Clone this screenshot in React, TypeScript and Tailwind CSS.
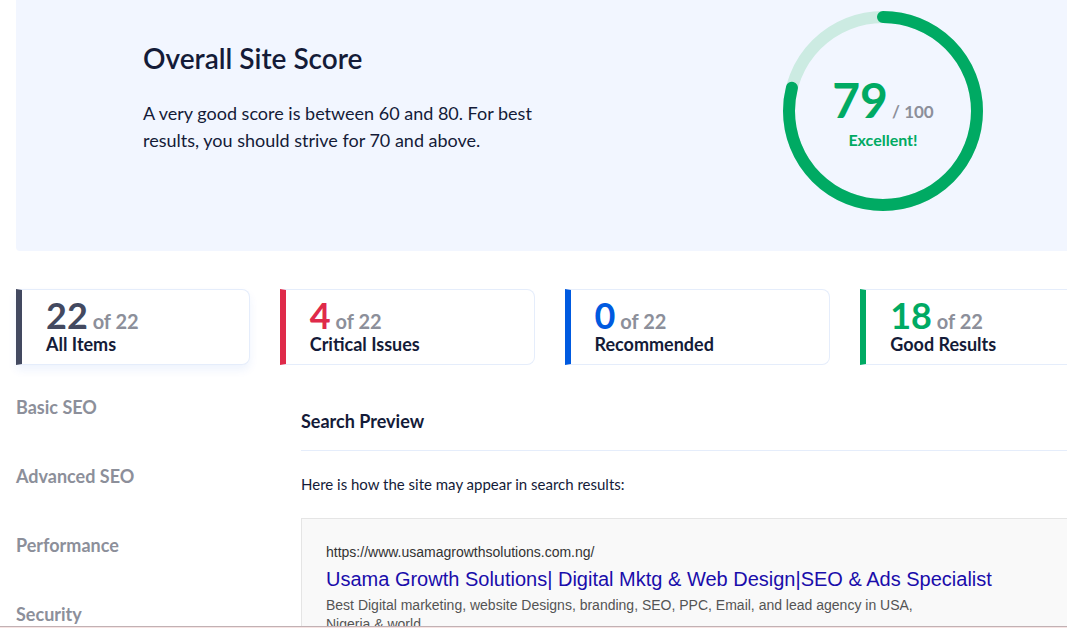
type Stat = {
  count: number;
  label: string;
  bar: string;
  number: string;
  active?: boolean;
};

const TOTAL = 22;
const SCORE = 79;

const stats: Stat[] = [
  { count: 22, label: "All Items", bar: "border-l-[#434960]", number: "text-[#434960]", active: true },
  { count: 4, label: "Critical Issues", bar: "border-l-[#df2a4a]", number: "text-[#df2a4a]" },
  { count: 0, label: "Recommended", bar: "border-l-[#005ae0]", number: "text-[#005ae0]" },
  { count: 18, label: "Good Results", bar: "border-l-[#00aa63]", number: "text-[#00aa63]" },
];

const sections = ["Basic SEO", "Advanced SEO", "Performance", "Security"];

function ScoreRing({ score }: { score: number }) {
  return (
    <div className="grid size-[200px] shrink-0 place-items-center">
      <svg viewBox="0 0 200 200" className="col-start-1 row-start-1 size-full" aria-hidden="true">
        <circle cx="100" cy="100" r="94" fill="none" stroke="#ccebe2" strokeWidth="12" />
        <circle
          cx="100"
          cy="100"
          r="94"
          fill="none"
          stroke="#00aa63"
          strokeWidth="12"
          strokeLinecap="round"
          pathLength="100"
          strokeDasharray={`${score} 100`}
          transform="rotate(-90 100 100)"
        />
      </svg>
      <div className="col-start-1 row-start-1 pt-[10px] text-center">
        <p className="text-[17px] leading-none font-bold text-[#8c8f9a]">
          <span className="text-5xl leading-[48px] text-[#00aa63]">{score}</span> / 100
        </p>
        <p className="text-base leading-8 font-bold text-[#00aa63]">Excellent!</p>
      </div>
    </div>
  );
}

function StatCard({ stat }: { stat: Stat }) {
  return (
    <button
      type="button"
      className={`rounded-r-lg border border-l-[6px] border-[#e5edfb] bg-white pt-[7px] pb-[9px] pl-6 text-left ${stat.bar} ${
        stat.active ? "shadow-[0_5px_10px_rgba(0,90,224,0.07)]" : ""
      }`}
    >
      <span className="block text-xl leading-none font-bold text-[#8c8f9a]">
        <span className={`text-4xl leading-9 ${stat.number}`}>{stat.count}</span> of {TOTAL}
      </span>
      <span className="block text-lg leading-[22px] font-bold text-[#141b38]">{stat.label}</span>
    </button>
  );
}

export default function App() {
  return (
    <div className="flex h-screen flex-col overflow-hidden bg-white font-['Lato',sans-serif] text-[#141b38]">
      <main className="min-h-0 flex-1 overflow-hidden pl-4">
        <div className="-mr-11">
          <section className="flex h-[251px] items-start justify-between rounded-b bg-[#f2f6ff] pt-[11px] pr-32 pl-[127px]">
            <div className="max-w-[420px] pt-[27px]">
              <h1 className="text-[28px] leading-10 font-semibold">Overall Site Score</h1>
              <p className="mt-[22px] text-lg leading-[27px]">
                A very good score is between 60 and 80. For best results, you should strive for 70 and above.
              </p>
            </div>
            <ScoreRing score={SCORE} />
          </section>

          <div className="mt-[38px] grid grid-cols-[234fr_255fr_266fr_251fr] gap-[30px]">
            {stats.map((stat) => (
              <StatCard key={stat.label} stat={stat} />
            ))}
          </div>

          <div className="flex">
            <nav className="flex w-[285px] shrink-0 flex-col gap-[45px] pt-[30px]">
              {sections.map((name) => (
                <a key={name} href="#" className="text-lg leading-6 font-bold text-[#8c8f9a]">
                  {name}
                </a>
              ))}
            </nav>

            <section className="min-w-0 flex-1 pt-11">
              <h2 className="border-b border-[#e5edfb] pb-[17px] text-lg leading-6 font-bold">Search Preview</h2>
              <p className="mt-[21px] text-[15px] leading-6">Here is how the site may appear in search results:</p>
              <div className="mt-[22px] border border-[#e5e5e5] bg-[#f9f9f9] px-6 pt-[23px] pb-6 font-['Liberation_Sans',Arial,sans-serif]">
                <p className="text-sm leading-5 text-[#333333]">https://www.usamagrowthsolutions.com.ng/</p>
                <a href="#" className="mt-[3px] block text-xl leading-7 text-[#1a0dab]">
                  Usama Growth Solutions| Digital Mktg &amp; Web Design|SEO &amp; Ads Specialist
                </a>
                <p className="mt-[3px] max-w-[600px] text-sm leading-[19px] text-[#545454]">
                  Best Digital marketing, website Designs, branding, SEO, PPC, Email, and lead agency in USA, Nigeria
                  &amp; world
                </p>
              </div>
            </section>
          </div>
        </div>
      </main>
      <div className="h-[2px] shrink-0 border-t border-[#c1b1b4] bg-[#f7e4e3]" />
    </div>
  );
}
